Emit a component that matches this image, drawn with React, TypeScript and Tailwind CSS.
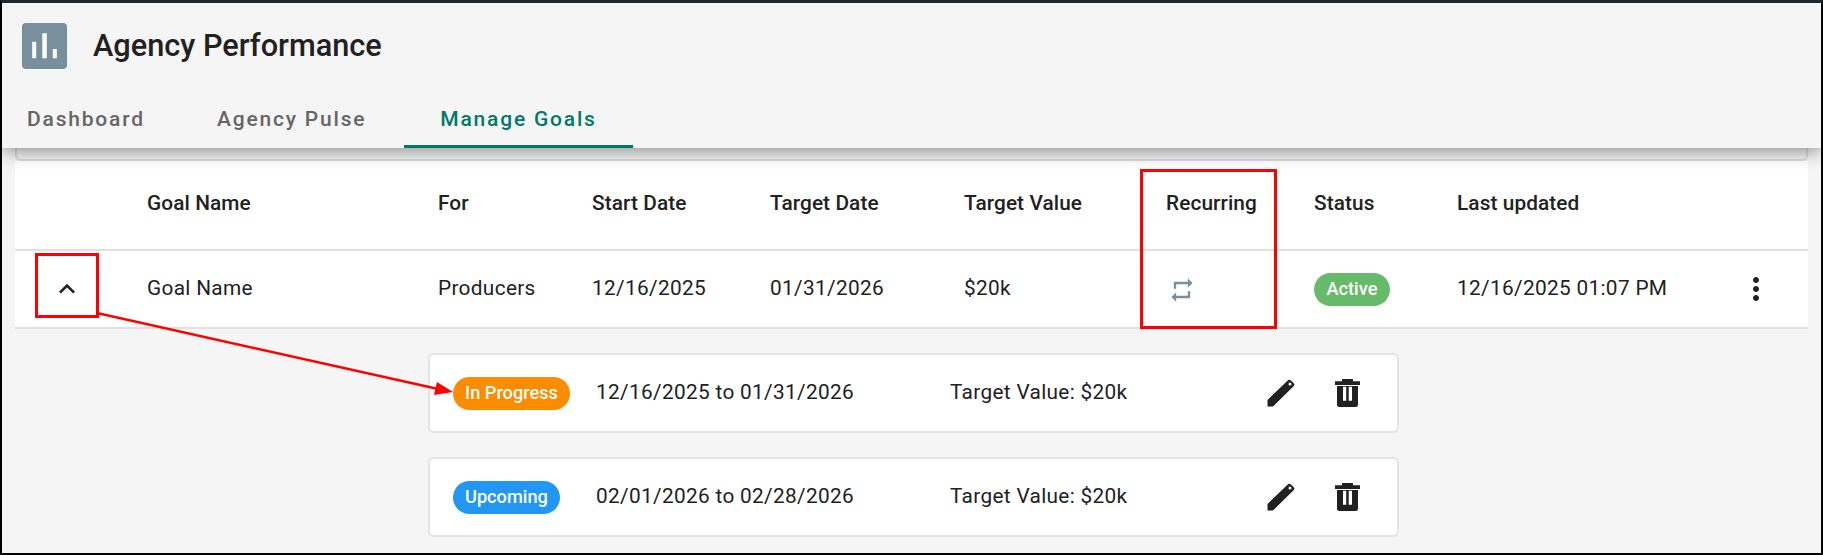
const font = "font-['Roboto',sans-serif]";

const gridCols = 'grid grid-cols-[132px_291px_154px_178px_194px_202px_148px_143px_1fr]';

function EditIcon() {
  return (
    <svg width="28" height="28" viewBox="0 0 28 28" fill="#212121">
      <path
        fillRule="evenodd"
        d="M.5 21 21 1.200c.8-.7 2-.7 2.800 0l3 3c.8.8.8 2 0 2.800L6 27.500H.5V21zM23 3.500a1.500 1.500 0 1 0 0 3 1.500 1.500 0 0 0 0-3z"
      />
    </svg>
  );
}

function TrashIcon() {
  return (
    <svg width="25" height="28" viewBox="0 0 25 28" fill="#212121">
      <path
        fillRule="evenodd"
        d="M7 0h11v2.200h7V6H0V2.200h7V0zM2 7h21v18.500a2.500 2.500 0 0 1-2.500 2.500h-16A2.500 2.500 0 0 1 2 25.500V7zm6 .7v14h3.200v-14H8zm5.700 0v14h3.300v-14h-3.300z"
      />
    </svg>
  );
}

function RepeatIcon() {
  return (
    <svg className="ml-[2px] mt-[2px]" width="28" height="28" viewBox="0 0 24 24" fill="#78909c">
      <path d="M7 7h10v3l4-4-4-4v3H5v6h2V7zm10 10H7v-3l-4 4 4 4v-3h12v-6h-2v4z" />
    </svg>
  );
}

function PeriodCard({ label, color, dates }: { label: string; color: string; dates: string }) {
  return (
    <div className="flex h-[80px] items-center rounded-md border-2 border-[#e4e4e4] bg-white pl-[23px]">
      <div className="w-[143px]">
        <span className={`inline-flex h-[33px] items-center rounded-full px-[12px] text-[18.2px] font-medium text-white ${color}`}>
          {label}
        </span>
      </div>
      <span className="w-[354px] text-[20.8px] tracking-[0.33px] text-[#212121]">{dates}</span>
      <span className="w-[317px] text-[20.8px] tracking-[0.33px] text-[#212121]">Target Value: $20k</span>
      <div className="flex items-center gap-[40px]">
        <EditIcon />
        <TrashIcon />
      </div>
    </div>
  );
}

export default function App() {
  const headers = ['', 'Goal Name', 'For', 'Start Date', 'Target Date', 'Target Value', 'Recurring', 'Status', 'Last updated'];

  return (
    <div className={`relative h-[555px] w-[1823px] overflow-hidden border-x-2 border-b-2 border-t-[3px] border-x-black border-b-black border-t-[#1c2b33] bg-[#f5f5f5] ${font}`}>
      {/* header */}
      <header className="relative z-10 h-[145px] bg-[#f5f5f5] shadow-[0_4px_16px_rgba(0,0,0,0.4)]">
        <div className="flex items-center pl-5 pt-5">
          <svg width="45" height="46" viewBox="0 0 45 46">
            <rect width="45" height="46" rx="4" fill="#78909c" />
            <path d="M10.200 18.700h4v16.600h-4zM20.300 10.300h4.500v25h-4.500zM30.800 26h4v9.300h-4z" fill="#fff" />
          </svg>
          <h1 className="ml-[26px] text-[30.700px] font-medium leading-none text-[#212121]">Agency Performance</h1>
        </div>
        <nav className="mt-[19px] flex text-[21px] font-medium tracking-[1.8px]">
          <span className="flex h-[60px] w-[190px] items-center pl-[25px] pt-[4px] text-[#666]">Dashboard</span>
          <span className="flex h-[60px] w-[212px] items-center pl-[25px] pt-[4px] text-[#666]">Agency Pulse</span>
          <span className="relative flex h-[60px] w-[229px] items-center justify-center pt-[4px] text-[#00796b]">
            Manage Goals
            <span className="absolute inset-x-0 bottom-0 h-[3px] bg-[#00796b]" />
          </span>
        </nav>
      </header>

      {/* table */}
      <main className="mx-[13px] h-[405px]">
        <div className="h-[13px] rounded-b-md border-x-2 border-b-2 border-[#dcdcdc]" />
        <div className="bg-white">
          <div className={`${gridCols} h-[90px] items-center border-b-2 border-[#e0e0e0] pb-[2px] text-[20.8px] font-medium tracking-[0.1px] text-[#212121]`}>
            {headers.map((h) => (
              <div key={h}>{h}</div>
            ))}
          </div>
          <div className={`${gridCols} h-[78px] items-center border-b-2 border-[#e0e0e0] text-[20.8px] tracking-[0.33px] text-[#212121]`}>
            <div className="pl-[36px]">
              <svg width="32" height="32" viewBox="0 0 24 24" fill="#212121">
                <path d="M7.410 15.410 12 10.830l4.590 4.580L18 14l-6-6-6 6z" />
              </svg>
            </div>
            <div>Goal Name</div>
            <div>Producers</div>
            <div>12/16/2025</div>
            <div>01/31/2026</div>
            <div>$20k</div>
            <div><RepeatIcon /></div>
            <div>
              <span className="inline-flex h-[33px] items-center rounded-full bg-[#66bb6a] px-[12.500px] text-[18.2px] font-medium tracking-normal text-white">Active</span>
            </div>
            <div className="flex items-center justify-between pr-[34px]">
              <span>12/16/2025 01:07 PM</span>
              <svg width="36" height="36" viewBox="0 0 24 24" fill="#212121">
                <path d="M12 8c1.100 0 2-.9 2-2s-.9-2-2-2-2 .9-2 2 .9 2 2 2zm0 2c-1.100 0-2 .9-2 2s.9 2 2 2 2-.9 2-2-.9-2-2-2zm0 6c-1.100 0-2 .9-2 2s.9 2 2 2 2-.9 2-2-.9-2-2-2z" />
              </svg>
            </div>
          </div>
        </div>
        <div className="ml-[413px] mt-[24px] flex w-[971px] flex-col gap-[24px]">
          <PeriodCard label="In Progress" color="bg-[#fb8c00]" dates="12/16/2025 to 01/31/2026" />
          <PeriodCard label="Upcoming" color="bg-[#2196f3]" dates="02/01/2026 to 02/28/2026" />
        </div>
      </main>

      {/* annotations */}
      <div className="absolute left-[33px] top-[250px] z-20 h-[65px] w-[64px] border-[3px] border-[#ff0000]" />
      <div className="absolute left-[1138px] top-[166px] z-20 h-[160px] w-[137px] border-[3px] border-[#ff0000]" />
      <svg className="absolute -left-[2px] -top-[3px] z-20" width="1823" height="555">
        <line x1="97" y1="313" x2="436" y2="388.500" stroke="#ff0000" strokeWidth="2.500" />
        <polygon points="453,392 434,395 437,382" fill="#ff0000" />
      </svg>
    </div>
  );
}
